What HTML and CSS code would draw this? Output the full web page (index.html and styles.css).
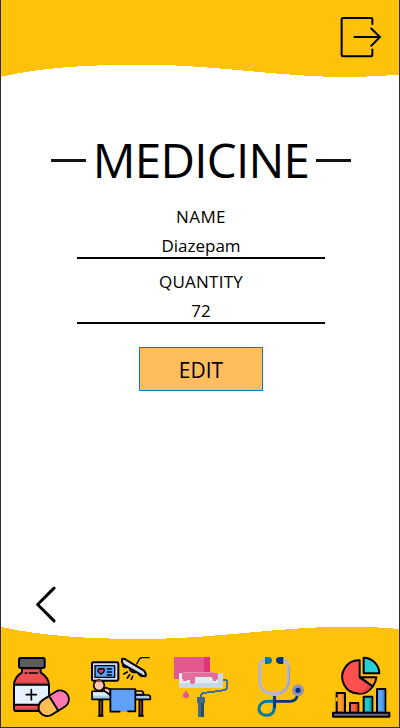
FILE: index.html
```html
<!DOCTYPE html>
<html lang="en">
<head>
<meta charset="utf-8">
<title>Medicine</title>
<link rel="stylesheet" href="styles.css">
</head>
<body>
<div class="app">
  <header class="top">
    <svg class="wave" viewBox="0 0 1200 240" aria-hidden="true"><path fill="#ffc20a" shape-rendering="crispEdges" d="M0 0H1200V224C1150 227 1100 231 1040 231C840 231 640 194 430 194C270 194 120 202 0 231Z"/></svg>
    <button class="logout" aria-label="Log out">
      <svg viewBox="0 0 126 126" fill="none" stroke="#000" stroke-width="6"><path d="M97 26V9Q97 6 94 6H9Q5 6 5 10V117Q5 121 9 121H94Q97 121 97 118V98"/><path d="M41 63H120M92 36L120 63L92 91"/></svg>
    </button>
  </header>
  <main>
    <h1><span class="dash"></span><span class="title">MEDICINE</span><span class="dash"></span></h1>
    <dl>
      <dt class="name">NAME</dt><dd class="drug">Diazepam</dd>
      <dt class="quantity">QUANTITY</dt><dd>72</dd>
    </dl>
    <button class="edit">EDIT</button>
    <button class="back" aria-label="Back">
      <svg viewBox="0 0 60 110" fill="none" stroke="#000" stroke-width="9" stroke-linecap="round" stroke-linejoin="round"><path d="M54 6L5 55L54 104"/></svg>
    </button>
  </main>
  <footer class="bottom">
    <svg class="wave" viewBox="0 0 1200 309" aria-hidden="true"><path fill="#ffc20a" shape-rendering="crispEdges" d="M0 309H1200V12C1150 8 1100 5 1040 5C840 5 640 42 430 42C270 42 120 33 0 5Z"/></svg>
    <nav>
      <a aria-label="Medicines"><svg viewBox="0 0 240 249" stroke="#000" stroke-width="6" stroke-linejoin="round" stroke-linecap="round" fill="none">
        <path fill="#ed5053" d="M66 70H122V82Q146 98 147 120V192Q147 198 140 198H50Q42 198 42 191V119Q44 95 66 82Z"/>
        <path stroke="none" fill="#c83f45" d="M45 112H144V117H45ZM45 190H144V195H45Z"/>
        <path fill="#e5f1ff" d="M42 119H147V179H42Z"/>
        <rect x="57" y="39" width="77" height="30" rx="5" fill="#5c5b60"/>
        <path d="M76 84H80M88 84H112" stroke-width="5"/>
        <path d="M79 149H109M94 134V165" stroke-width="5"/>
        <g transform="rotate(-32 161 175)"><rect x="112" y="149" width="98" height="52" rx="26" fill="#ffbd56"/><path stroke="none" fill="#ff78b3" d="M161 152H184A23 23 0 0 1 184 198H161Z"/><path d="M161 149V201"/></g>
      </svg></a>
      <a aria-label="Operations"><svg viewBox="0 0 240 249" stroke="#000" stroke-width="6" stroke-linejoin="round" stroke-linecap="round" fill="none">
        <rect x="36" y="52" width="79" height="55" rx="4" fill="#d0dceb"/>
        <rect x="45" y="62" width="59" height="35" fill="#60a0f6" stroke-width="4"/>
        <path fill="#f04455" stroke-width="4" d="M63 88L54 79Q53 70 60 71L63 74Q69 67 73 74Q74 80 63 88Z"/>
        <path stroke-width="4" d="M82 72H94M82 81H94M82 90H94"/>
        <path d="M170 57L179 41Q182 38 187 38H207" stroke-width="4"/>
        <path fill="#f0a42c" stroke-width="5" d="M128 57Q127 68 140 67L150 60ZM149 71Q151 84 168 82L173 75ZM175 86Q181 97 190 93L192 86Z"/>
        <path fill="#d0dceb" d="M126 42Q133 40 139 45L192 77Q199 84 197 93Q190 95 183 89L130 59Q124 51 126 42Z"/>
        <path stroke-width="5" d="M142 81L131 87M149 89L142 99M158 94L154 103"/>
        <path fill="#925039" stroke-width="5" d="M58 164H67V211H58ZM178 164H187V211H178Z"/>
        <path fill="#a8cce9" stroke-width="5" d="M36 139H84L91 150H204Q211 150 211 157V163H36Z"/>
        <path stroke="none" fill="#dcecf6" d="M39 142H73L86 152H39Z"/>
        <path fill="#ffc5af" stroke-width="5" d="M72 127L91 132V150L72 137ZM166 138H184Q191 139 191 149H166Z"/>
        <circle cx="57" cy="121" r="16" fill="#ffc5af" stroke-width="5"/>
        <path stroke="none" fill="#924d32" d="M46 109Q57 100 68 109L63 111H50Z"/>
        <path fill="#60a0f6" stroke="none" d="M91 132H166V200H91Z"/>
        <path fill="#438ced" stroke="none" d="M91 132H96V200H91Z"/>
        <path d="M87 132H166V199H144M119 200H91V132" stroke-width="5"/>
        <path d="M55 213H69M176 213H190" stroke-width="4"/>
      </svg></a>
      <a aria-label="Cleaning"><svg viewBox="0 0 240 249" fill="none" shape-rendering="crispEdges">
        <path fill="#e35891" d="M42 36H132V101H42Z"/><path fill="#dc357c" d="M132 36H150V83H132Z"/>
        <path fill="#e0edf1" d="M57 83H189V129H57Z"/><path fill="#c8d7e5" d="M175 83H189V129H57V114H175Z"/>
        <path fill="#e46d9e" d="M70 83H174V99Q170 108 164 108T157 99Q151 94 145 96H139Q136 99 132 96H105V110Q103 117 97 117T89 111V106Q83 100 80 108H73Q67 108 67 97V83Z"/>
        <path fill="#e891b5" d="M70 81H163V84H70Z"/>
        <path fill="#e35891" d="M78 137L86 149Q88 159 78 159T70 149Z"/>
        <path stroke="#416f92" stroke-width="6" d="M189 104H199Q202 106 201 111V127Q200 135 191 136L130 144Q124 145 124 151V157"/>
        <path fill="#42698b" d="M111 156H134V174H131V216H114V174H111Z"/><path fill="#2b4d6d" d="M123 174H131V216H123Z"/>
      </svg></a>
      <a aria-label="Check-ups"><svg viewBox="0 0 240 249" fill="none">
        <path stroke="#b8b6ce" stroke-width="10" d="M76 46Q59 46 59 65V107C59 133 77 147 102 147S145 133 145 107V65Q145 46 128 46"/>
        <path stroke="#9894b4" stroke-width="3" d="M148 65V107Q145 134 120 146"/>
        <path fill="#007aa8" d="M75 36H86Q96 37 96 46T86 57H75Z"/><path fill="#003583" d="M130 36H119Q108 37 108 46T119 57H130Z"/>
        <path stroke="#0079a5" stroke-width="9" d="M103 169H82C49 171 49 211 80 211C97 211 103 201 103 187V153"/>
        <path stroke="#003583" stroke-width="8" d="M104 153V190M107 169H151Q168 169 172 152"/>
        <circle cx="174" cy="136" r="13" fill="#003583" stroke="#9993b1" stroke-width="10"/>
      </svg></a>
      <a aria-label="Reports"><svg viewBox="0 0 240 249" stroke="#000" stroke-width="6" stroke-linejoin="round" fill="none">
        <path fill="#ff5050" d="M119 46V97L158 124A50 50 0 1 1 119 46Z"/>
        <path stroke="none" fill="#e64045" d="M143 117L154 125Q139 147 115 145Q137 139 143 117Z"/>
        <path fill="#28d0d4" d="M131 38A48 48 0 0 1 178 85H131Z"/>
        <path fill="#ff9b2b" d="M121 97H169Q168 111 158 124Z"/>
        <path fill="#ff9b2b" d="M50 144H75V203H50Z"/><path fill="#f16637" d="M90 174H115V203H90Z"/><path fill="#20c7ca" d="M131 155H157V203H131Z"/><path fill="#5ba5f7" d="M171 132H196V203H171Z"/>
        <path stroke="none" fill="#f5791b" d="M66 147H72V201H66Z"/><path stroke="none" fill="#d8482f" d="M106 177H112V201H106Z"/><path stroke="none" fill="#13a5ad" d="M148 158H154V201H148Z"/><path stroke="none" fill="#438bdc" d="M187 135H193V201H187Z"/>
        <path stroke="#ffc20a" d="M50 157V169"/>
        <rect x="39" y="203" width="169" height="12" fill="#69696d"/>
      </svg></a>
    </nav>
  </footer>
</div>
</body>
</html>
```

FILE: styles.css
```css
* { box-sizing: border-box; }
body { margin: 0; background: #fff; color: #000; font-family: "Segoe UI", "Open Sans", "Noto Sans", sans-serif; }
button { padding: 0; border: 0; background: none; color: inherit; font: inherit; }
svg { display: block; }
.app { position: relative; display: flex; flex-direction: column; width: 400px; height: 728px; overflow: hidden; }
.app::after { content: ""; position: absolute; inset: 0; border: solid #2d2d2d; border-width: 0 1px 1px; pointer-events: none; }
.top, .bottom { display: grid; flex: none; }
.top { height: 80px; }
.bottom { height: 103px; }
.top > *, .bottom > * { grid-area: 1 / 1; }
.wave { width: 400px; }
.logout { justify-self: end; width: 42px; height: 42px; margin: 16px 18px 0 0; }
.logout svg { width: 42px; height: 42px; }
main { flex: 1; display: flex; flex-direction: column; align-items: center; }
h1 { display: flex; align-items: center; justify-content: space-between; width: 300px; height: 60px; margin: 50px 0 0 2px; font-size: 48px; font-weight: 400; line-height: 60px; }
.title { font-size: 47.5px; letter-spacing: -0.7px; }
.dash { width: 35px; height: 3px; background: #101510; }
dl { width: 248px; margin: 12px 0 0 2px; font-size: 17px; line-height: 29px; text-align: center; }
dt { height: 29px; }
.name { letter-spacing: 0.4px; }
.quantity { letter-spacing: 0.25px; }
dd { height: 28px; margin: 0 0 8px; border-bottom: 2px solid #000; }
dd:last-child { margin-bottom: 0; }
.edit { width: 124px; height: 44px; margin: 23px 0 0 2px; padding-top: 2px; border: 1px solid #0878d4; background: #ffbd5e; font-size: 21px; line-height: 40px; }
.back { align-self: flex-start; width: 20px; height: 37px; margin: 195px 0 0 36px; }
.back svg { width: 20px; height: 37px; }
nav { display: grid; grid-template-columns: repeat(5, 80px); padding-top: 20px; }
nav svg { width: 80px; height: 83px; }
```
